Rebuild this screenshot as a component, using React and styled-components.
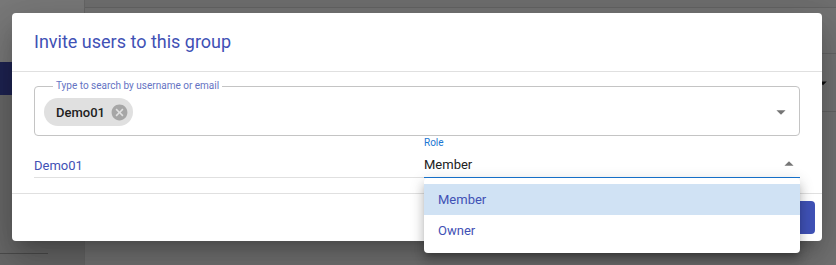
import React from 'react';
import styled, { createGlobalStyle } from 'styled-components';

const GlobalStyle = createGlobalStyle`
  * { box-sizing: border-box; }
  body {
    margin: 0;
    font-family: Roboto, "Liberation Sans", Arial, sans-serif;
  }
`;

const Page = styled.div`
  position: relative;
  width: 836px;
  height: 265px;
  overflow: hidden;
`;

/* page behind the modal */
const AppShell = styled.div`
  display: flex;
  height: 100%;
  background: #e8e8e8;
`;

const Sidebar = styled.aside`
  width: 85px;
  display: flex;
  flex-direction: column;
  border-right: 1px solid #cfcfcf;
  background: #f2f2f2;
`;

const SideSpacer = styled.div`
  height: 62px;
`;

const SideItem = styled.div`
  height: 33px;
  background: #3d46a4;
`;

const SideRest = styled.div`
  flex: 1;
  display: flex;
  flex-direction: column;
  justify-content: flex-end;
  padding-bottom: 11px;
  background: #d2d2d2;
`;

const SideRule = styled.div`
  width: 48px;
  height: 1px;
  background: #9a9a9a;
`;

const Main = styled.main`
  flex: 1;
  display: flex;
  flex-direction: column;
`;

const TopBar = styled.div`
  height: 8px;
  background: #dedede;
  border-bottom: 1px solid #c8c8c8;
`;

const BgRow = styled.div`
  height: ${p => p.h}px;
  display: flex;
  align-items: center;
  justify-content: flex-end;
  padding-right: 4px;
  border-bottom: 1px solid #cacaca;
`;

const Backdrop = styled.div`
  position: absolute;
  inset: 0;
  background: rgba(0, 0, 0, 0.5);
`;

/* dialog */
const Dialog = styled.div`
  position: absolute;
  left: 12px;
  top: 13px;
  width: 810px;
  background: #fff;
  border-radius: 4px;
  box-shadow: 0px 11px 15px -7px rgba(0, 0, 0, 0.2),
    0px 24px 38px 3px rgba(0, 0, 0, 0.14),
    0px 9px 46px 8px rgba(0, 0, 0, 0.12);
`;

const DialogTitle = styled.h2`
  margin: 0;
  padding: 14px 22px;
  font-size: 18px;
  font-weight: 400;
  line-height: 30px;
  color: #3f51b5;
`;

const DialogContent = styled.div`
  padding: 9px 22px 15px;
  border-top: 1px solid #e0e0e0;
  border-bottom: 1px solid #e0e0e0;
`;

const SearchField = styled.fieldset`
  margin: 0;
  height: 55px;
  padding: 0 7px 0 9px;
  display: flex;
  align-items: center;
  border: 1px solid #c4c4c4;
  border-radius: 4px;
  min-width: 0;
`;

const Legend = styled.legend`
  margin-left: 9px;
  padding: 0 3px;
  font-size: 10px;
  line-height: 10px;
  color: #6573c3;
`;

const SearchInner = styled.div`
  flex: 1;
  display: flex;
  align-items: center;
  justify-content: space-between;
  margin-top: -2px;
`;

const Chip = styled.div`
  display: inline-flex;
  align-items: center;
  gap: 5px;
  height: 28px;
  padding: 0 4px 0 12px;
  border-radius: 14px;
  background: #e0e0e0;
  font-size: 13px;
  font-weight: 500;
  color: #212121;
`;

const IconSvg = styled.svg`
  display: block;
  fill: ${p => p.color || 'rgba(0,0,0,0.54)'};
`;

const UserRow = styled.div`
  display: grid;
  grid-template-columns: 390px 1fr;
  margin-top: 2px;
`;

const UserName = styled.div`
  display: flex;
  align-items: flex-end;
  padding-bottom: 4px;
  border-bottom: 1px solid #e0e0e0;
  font-size: 13px;
  color: #3f51b5;
`;

const SelectCell = styled.div`
  position: relative;
`;

const SelectLabel = styled.div`
  height: 11px;
  font-size: 10px;
  line-height: 10px;
  color: #1976d2;
`;

const SelectValue = styled.div`
  height: 29px;
  display: flex;
  align-items: center;
  justify-content: space-between;
  padding-top: 2px;
  border-bottom: 1px solid #1976d2;
  font-size: 13px;
  color: #212121;
`;

const Menu = styled.ul`
  position: absolute;
  top: 100%;
  left: 0;
  right: 0;
  z-index: 2;
  margin: 0;
  padding: 6px 0 7px;
  list-style: none;
  background: #fff;
  border-radius: 4px;
  box-shadow: 0px 5px 5px -3px rgba(0, 0, 0, 0.2),
    0px 8px 10px 1px rgba(0, 0, 0, 0.14),
    0px 3px 14px 2px rgba(0, 0, 0, 0.12);
`;

const MenuItem = styled.li`
  height: 31px;
  display: flex;
  align-items: center;
  padding: 0 14px;
  font-size: 13px;
  color: #3f51b5;
  background: ${p => (p.selected ? '#d0e2f4' : 'transparent')};
`;

const DialogActions = styled.div`
  display: flex;
  justify-content: flex-end;
  padding: 7px 7px;
`;

const Button = styled.button`
  height: 33px;
  padding: 0 15px;
  border: none;
  border-radius: 4px;
  background: #3f51b5;
  color: #fff;
  font-family: inherit;
  font-size: 13px;
  font-weight: 500;
  letter-spacing: 0.4px;
  text-transform: uppercase;
`;

const ArrowDown = ({ size = 22, color }) => (
  <IconSvg width={size} height={size} viewBox="0 0 24 24" color={color}>
    <path d="M7 10l5 5 5-5z" />
  </IconSvg>
);

const ArrowUp = ({ size = 22 }) => (
  <IconSvg width={size} height={size} viewBox="0 0 24 24">
    <path d="M7 14l5-5 5 5z" />
  </IconSvg>
);

const CancelIcon = () => (
  <IconSvg width={19} height={19} viewBox="0 0 24 24" color="rgba(0,0,0,0.26)">
    <path d="M12 2C6.47 2 2 6.47 2 12s4.47 10 10 10 10-4.47 10-10S17.53 2 12 2zm5 13.59L15.59 17 12 13.41 8.41 17 7 15.59 10.59 12 7 8.41 8.41 7 12 10.59 15.59 7 17 8.41 13.41 12 17 15.59z" />
  </IconSvg>
);

const roles = ['Member', 'Owner'];

export default function App() {
  const role = 'Member';

  return (
    <Page>
      <GlobalStyle />
      <AppShell>
        <Sidebar>
          <SideSpacer />
          <SideItem />
          <SideRest>
            <SideRule />
          </SideRest>
        </Sidebar>
        <Main>
          <TopBar />
          <BgRow h={46} />
          <BgRow h={58}>
            <ArrowDown size={18} color="#222" />
          </BgRow>
        </Main>
      </AppShell>
      <Backdrop />

      <Dialog>
        <DialogTitle>Invite users to this group</DialogTitle>
        <DialogContent>
          <SearchField>
            <Legend>Type to search by username or email</Legend>
            <SearchInner>
              <Chip>
                Demo01
                <CancelIcon />
              </Chip>
              <ArrowDown />
            </SearchInner>
          </SearchField>

          <UserRow>
            <UserName>Demo01</UserName>
            <SelectCell>
              <SelectLabel>Role</SelectLabel>
              <SelectValue>
                {role}
                <ArrowUp />
              </SelectValue>
              <Menu>
                {roles.map(r => (
                  <MenuItem key={r} selected={r === role}>
                    {r}
                  </MenuItem>
                ))}
              </Menu>
            </SelectCell>
          </UserRow>
        </DialogContent>
        <DialogActions>
          <Button>Invite</Button>
        </DialogActions>
      </Dialog>
    </Page>
  );
}
